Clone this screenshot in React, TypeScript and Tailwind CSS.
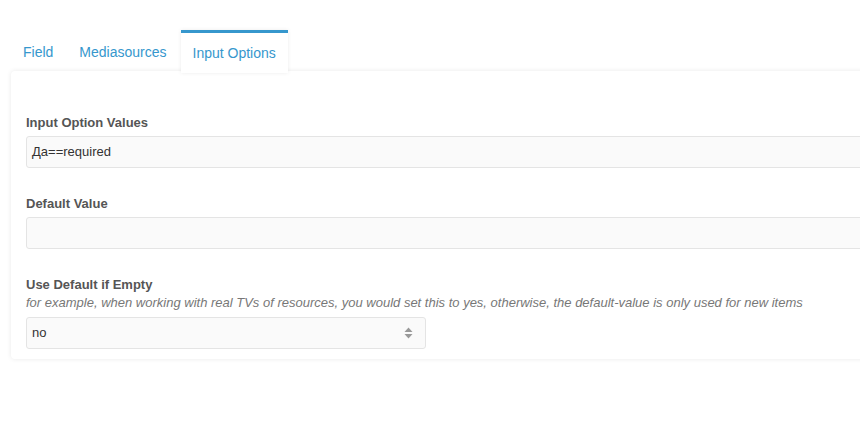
import React from "react";

function SortIcon() {
  return (
    <svg width="9" height="12" viewBox="0 0 9 12" className="block">
      <path d="M4.5 0.5 L8.5 5 L0.5 5 Z" fill="#999" />
      <path d="M4.5 11.5 L8.5 7 L0.5 7 Z" fill="#999" />
    </svg>
  );
}

export default function App() {
  return (
    <div
      className="w-[860px] h-[424px] overflow-hidden bg-white text-[13px] text-[#333]"
      style={{ fontFamily: '"Liberation Sans", Arial, sans-serif' }}
    >
      <div className="pt-[30px]">
        <div className="flex items-end pl-[11px] gap-[2px] relative z-10">
          <div className="h-[40px] px-3 flex items-center text-[#3697cd] text-[14px]">Field</div>
          <div className="h-[40px] px-3 flex items-center text-[#3697cd] text-[14px]">Mediasources</div>
          <div className="h-[43px] px-3 flex items-center border-t-[3px] border-[#3697cd] bg-white text-[#3697cd] text-[14px] shadow-[0_0_4px_rgba(0,0,0,0.08)] -mb-px">
            Input Options
          </div>
        </div>
        <div className="ml-[11px] w-[880px] -mt-px bg-white rounded-[4px] shadow-[0_0_5px_rgba(0,0,0,0.09)] pt-[44px] pb-[10px] px-[15px] relative">
          <div className="text-[13px] font-bold text-[#555] leading-[16px]">Input Option Values</div>
          <div className="mt-[5px] h-[32px] bg-[#fafafa] border border-[#e4e4e4] rounded-[3px] flex items-center pl-[5px] text-[#333]">
            Да==required
          </div>
          <div className="mt-[28px] text-[13px] font-bold text-[#555] leading-[16px]">Default Value</div>
          <div className="mt-[5px] h-[32px] bg-[#fafafa] border border-[#e4e4e4] rounded-[3px]" />
          <div className="mt-[28px] text-[13px] font-bold text-[#555] leading-[16px]">Use Default if Empty</div>
          <div className="text-[13px] italic text-[#777] leading-[17px] mt-px">
            for example, when working with real TVs of resources, you would set this to yes, otherwise, the default-value is only used for new items
          </div>
          <div className="mt-[6px] w-[400px] h-[32px] bg-[#fafafa] border border-[#e4e4e4] rounded-[3px] flex items-center justify-between pl-[5px] pr-[12px] text-[#333]">
            <span>no</span>
            <SortIcon />
          </div>
        </div>
      </div>
    </div>
  );
}
